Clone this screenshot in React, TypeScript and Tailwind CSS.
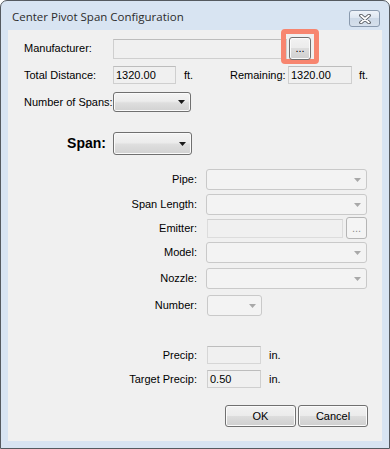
import React from 'react';

type BoxProps = {
  w: number;
  h?: number;
  value?: string;
  className?: string;
};

const Arrow = ({ disabled }: { disabled?: boolean }) => (
  <svg width="7" height="4" viewBox="0 0 7 4">
    <path d="M0 0h7L3.5 4z" fill={disabled ? '#a8a8a8' : '#1a1a1a'} />
  </svg>
);

const TextBox = ({ w, h = 18, value, className = '' }: BoxProps) => (
  <div
    style={{ width: w, height: h }}
    className={`flex shrink-0 items-center border border-[#cfcfcf] border-t-[#bdbdbd] bg-[#f0f0f0] px-[2px] text-[11px] text-black ${className}`}
  >
    {value}
  </div>
);

const Combo = ({ w, h = 21, disabled }: { w: number; h?: number; disabled?: boolean }) => (
  <div
    style={{ width: w, height: h }}
    className={
      disabled
        ? 'flex shrink-0 items-center justify-end rounded-[3px] border border-[#c9c9c9] bg-[#f3f3f3] pr-[5px]'
        : 'flex shrink-0 items-center justify-end rounded-[3px] border border-[#707070] bg-[linear-gradient(to_bottom,#f4f4f4_0%,#ececec_45%,#dedede_55%,#d2d2d2_100%)] pr-[5px] shadow-[inset_0_0_0_1px_#fafafa]'
    }
  >
    <Arrow disabled={disabled} />
  </div>
);

const WinButton = ({
  w,
  h,
  label,
  disabled,
  className = '',
}: {
  w: number;
  h: number;
  label: string;
  disabled?: boolean;
  className?: string;
}) => (
  <div
    style={{ width: w, height: h }}
    className={
      disabled
        ? `flex shrink-0 items-center justify-center rounded-[3px] border border-[#b5b5b5] bg-[#f4f4f4] text-[11px] text-[#8d8d8d] ${className}`
        : `flex shrink-0 items-center justify-center rounded-[3px] border border-[#707070] bg-[linear-gradient(to_bottom,#f2f2f2_0%,#ebebeb_50%,#dddddd_50%,#cfcfcf_100%)] text-[11px] text-black shadow-[inset_0_0_0_1px_#fbfbfb] ${className}`
    }
  >
    {label}
  </div>
);

// right-aligned label column used by the span detail rows
const Label = ({ text }: { text: string }) => (
  <div className="w-[189px] shrink-0 text-right text-[11px] text-black">{text}</div>
);

const App = () => {
  return (
    <div className="relative flex h-[449px] w-[390px] flex-col rounded-t-[7px] border border-[#555a60] bg-[#d8e4f2] font-['Liberation_Sans',Arial,sans-serif]">
      {/* Title bar */}
      <div className="flex h-[29px] items-start justify-between pl-[11px] pr-[9px] pt-[8px]">
        <span className="font-['Open_Sans',sans-serif] text-[11.5px] leading-[16px] text-[#2c2c2c]">
          Center Pivot Span Configuration
        </span>
        <div className="mt-[1px] flex h-[17px] w-[31px] items-center justify-center rounded-[3px] border border-[#8a9aae] bg-[linear-gradient(to_bottom,#eef3f9_0%,#dce5f0_50%,#cdd9e7_50%,#d6e0ec_100%)]">
          <svg width="12" height="10" viewBox="0 0 12 10">
            <path d="M2 1.5l8 7M10 1.5l-8 7" stroke="#4b4f55" strokeWidth="3.6" strokeLinecap="round" />
            <path d="M2 1.5l8 7M10 1.5l-8 7" stroke="#ffffff" strokeWidth="1.8" strokeLinecap="round" />
          </svg>
        </div>
      </div>

      {/* Client area */}
      <div className="mx-[7px] flex h-[411px] flex-col bg-[#f0f0f0] text-[11px] text-black">
        {/* Manufacturer */}
        <div className="mt-[7px] flex h-[23px] items-center pl-[16px]">
          <div className="w-[89px] shrink-0">Manufacturer:</div>
          <TextBox w={174} h={20} />
          <WinButton w={22} h={23} label="..." className="relative z-10 ml-[2px] text-[#5a2a8a]" />
        </div>

        {/* Distance */}
        <div className="mt-[6px] flex h-[18px] items-center pl-[16px]">
          <div className="w-[89px] shrink-0">Total Distance:</div>
          <TextBox w={63} value="1320.00" />
          <div className="ml-[8px] w-[46px] shrink-0">ft.</div>
          <div className="w-[58px] shrink-0">Remaining:</div>
          <TextBox w={64} value="1320.00" />
          <div className="ml-[7px]">ft.</div>
        </div>

        {/* Number of spans */}
        <div className="mt-[8px] flex h-[20px] items-center pl-[16px]">
          <div className="w-[89px] shrink-0">Number of Spans:</div>
          <Combo w={78} h={20} />
        </div>

        {/* Span */}
        <div className="mt-[20px] flex h-[23px] items-center">
          <div className="w-[98px] shrink-0 text-right text-[14px] font-bold">Span:</div>
          <div className="ml-[7px]">
            <Combo w={79} h={23} />
          </div>
        </div>

        {/* Span details */}
        <div className="mt-[14px] flex h-[21px] items-center">
          <Label text="Pipe:" />
          <div className="ml-[9px]">
            <Combo w={161} disabled />
          </div>
        </div>
        <div className="mt-[4px] flex h-[21px] items-center">
          <Label text="Span Length:" />
          <div className="ml-[9px]">
            <Combo w={161} disabled />
          </div>
        </div>
        <div className="mt-[2px] flex h-[22px] items-center">
          <Label text="Emitter:" />
          <TextBox w={136} h={19} className="ml-[10px] border-[#dcdcdc] border-t-[#d0d0d0]" />
          <WinButton w={21} h={22} label="..." disabled className="ml-[3px]" />
        </div>
        <div className="mt-[3px] flex h-[21px] items-center">
          <Label text="Model:" />
          <div className="ml-[9px]">
            <Combo w={161} disabled />
          </div>
        </div>
        <div className="mt-[5px] flex h-[21px] items-center">
          <Label text="Nozzle:" />
          <div className="ml-[9px]">
            <Combo w={161} disabled />
          </div>
        </div>
        <div className="mt-[6px] flex h-[21px] items-center">
          <Label text="Number:" />
          <div className="ml-[10px]">
            <Combo w={55} disabled />
          </div>
        </div>

        {/* Precipitation */}
        <div className="mt-[30px] flex h-[18px] items-center">
          <Label text="Precip:" />
          <TextBox w={54} className="ml-[10px] border-[#d6d6d6]" />
          <div className="ml-[8px]">in.</div>
        </div>
        <div className="mt-[6px] flex h-[18px] items-center">
          <Label text="Target Precip:" />
          <TextBox w={54} value="0.50" className="ml-[10px]" />
          <div className="ml-[8px]">in.</div>
        </div>

        {/* Actions */}
        <div className="mt-[17px] flex h-[22px] items-center justify-end gap-[2px] pr-[14px]">
          <WinButton w={71} h={22} label="OK" />
          <WinButton w={70} h={22} label="Cancel" />
        </div>
      </div>

      {/* Annotation highlight around the browse button */}
      <div className="absolute left-[280px] top-[28px] h-[35px] w-[38px] rounded-[4px] border-[5px] border-[#f7856f]" />
    </div>
  );
};

export default App;
